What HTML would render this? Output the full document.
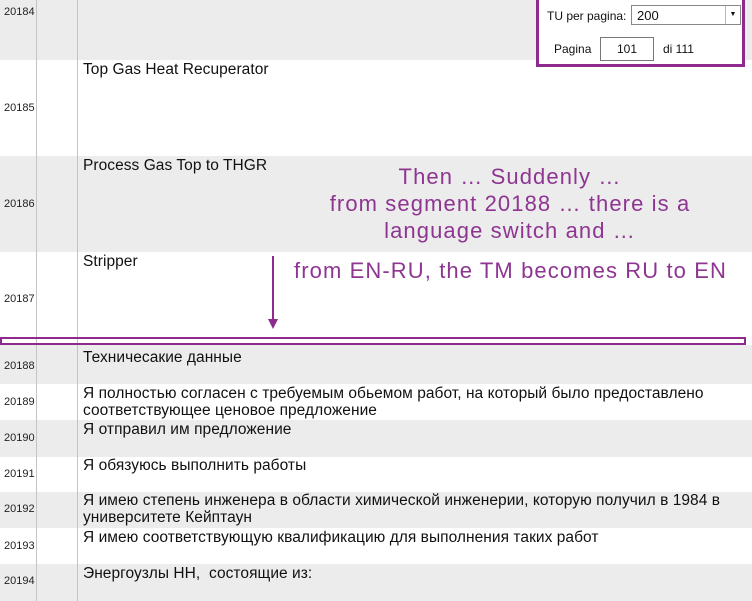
<!DOCTYPE html>
<html><head><meta charset="utf-8"><style>
body{margin:0;width:752px;height:601px;overflow:hidden;background:#fff;font-family:"Liberation Sans",sans-serif;position:relative}
.r{position:absolute;left:0;width:752px}
.g{background:#ececec}
.n{position:absolute;left:4px;font-size:11px;color:#222}
.t{position:absolute;left:83px;font-size:15.5px;color:#111;line-height:17px;white-space:nowrap;letter-spacing:0.05px}
.vl{position:absolute;top:0;height:601px;width:1px;background:#c4c4c4}
.a{position:absolute;color:#8e3591;font-size:22px;letter-spacing:1.1px;white-space:nowrap;text-align:center}
</style></head><body>
<div class="r g" style="top:0;height:60px"></div>
<div class="r g" style="top:156px;height:96px"></div>
<div class="r g" style="top:345px;height:39px"></div>
<div class="r g" style="top:420px;height:37px"></div>
<div class="r g" style="top:492px;height:36px"></div>
<div class="r g" style="top:564px;height:37px"></div>
<div class="vl" style="left:36px"></div>
<div class="vl" style="left:77px"></div>

<div class="n" style="top:6px">20184</div>
<div class="n" style="top:102px">20185</div>
<div class="n" style="top:198px">20186</div>
<div class="n" style="top:293px">20187</div>
<div class="n" style="top:360px">20188</div>
<div class="n" style="top:396px">20189</div>
<div class="n" style="top:432px">20190</div>
<div class="n" style="top:468px">20191</div>
<div class="n" style="top:503px">20192</div>
<div class="n" style="top:540px">20193</div>
<div class="n" style="top:575px">20194</div>

<div class="t" style="top:61px">Top Gas Heat Recuperator</div>
<div class="t" style="top:157px">Process Gas Top to THGR</div>
<div class="t" style="top:253px">Stripper</div>
<div class="t" style="top:349px">Техничесакие данные</div>
<div class="t" style="top:385px">Я полностью согласен с требуемым обьемом работ, на который было предоставлено<br>соответствующее ценовое предложение</div>
<div class="t" style="top:421px">Я отправил им предложение</div>
<div class="t" style="top:457px">Я обязуюсь выполнить работы</div>
<div class="t" style="top:492px">Я имею степень инженера в области химической инженерии, которую получил в 1984 в<br>университете Кейптаун</div>
<div class="t" style="top:529px">Я имею соответствующую квалификацию для выполнения таких работ</div>
<div class="t" style="top:565px">Энергоузлы НН,&nbsp; состоящие из:</div>

<div style="position:absolute;left:0;top:337px;width:742px;height:4px;border:2px solid #8e2a8e"></div>
<div style="position:absolute;left:272px;top:256px;width:2px;height:64px;background:#8e2a8e"></div>
<div style="position:absolute;left:268px;top:319px;width:0;height:0;border-left:5px solid transparent;border-right:5px solid transparent;border-top:10px solid #8e2a8e"></div>

<div class="a" style="left:290px;top:164px;width:440px">Then … Suddenly …</div>
<div class="a" style="left:290px;top:191px;width:440px">from segment 20188 … there is a</div>
<div class="a" style="left:290px;top:218px;width:440px">language switch and …</div>
<div class="a" style="left:294px;top:258px">from EN-RU, the TM becomes RU to EN</div>

<div style="position:absolute;left:536px;top:0;width:203px;height:64px;background:#fff;border:3px solid #8e2a8e;border-top:none;font-size:12px;color:#111">
 <div style="position:absolute;left:8px;top:9px">TU per pagina:</div>
 <div style="position:absolute;left:92px;top:5px;width:108px;height:18px;border:1px solid #888;background:#fff"><span style="position:absolute;left:5px;top:2px;font-size:13px">200</span><span style="position:absolute;right:0;top:0;width:14px;height:18px;border-left:1px solid #bbb;font-size:7px;text-align:center;line-height:18px">▼</span></div>
 <div style="position:absolute;left:15px;top:42px">Pagina</div>
 <div style="position:absolute;left:61px;top:37px;width:52px;height:22px;border:1px solid #777;text-align:center;line-height:22px">101</div>
 <div style="position:absolute;left:124px;top:42px">di 111</div>
</div>
</body></html>
